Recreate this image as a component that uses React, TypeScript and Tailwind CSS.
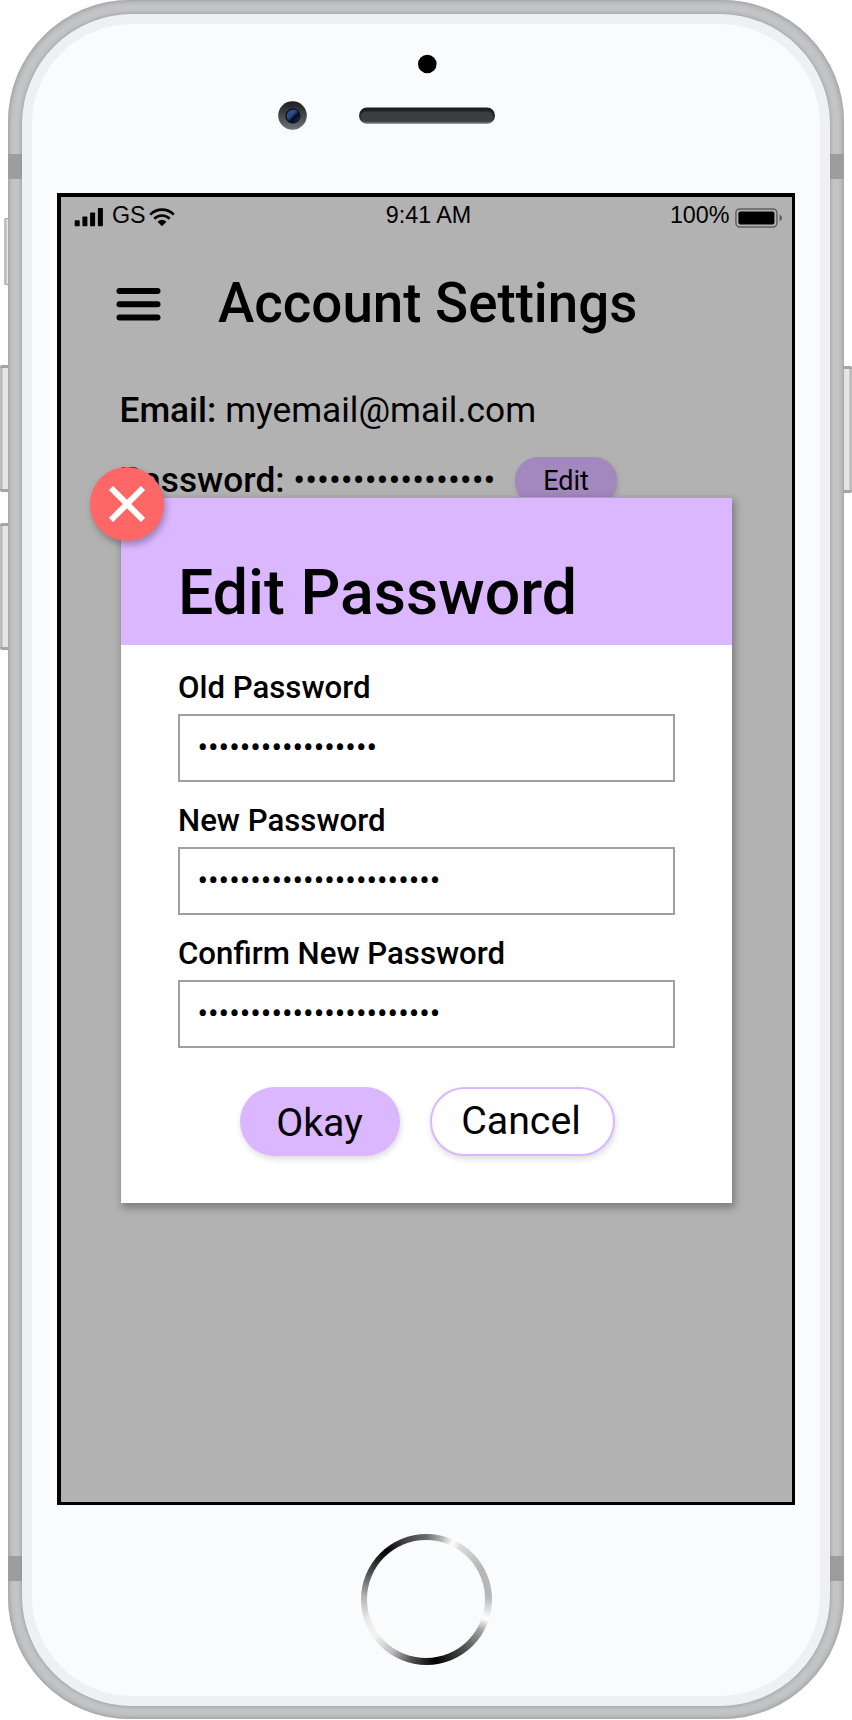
import React from "react";

const dots = (n: number) => "•".repeat(n);

function SideButton({ className }: { className: string }) {
  return (
    <div
      className={
        "absolute border-[#a3a6a5] bg-[linear-gradient(90deg,#c4c4c5_0px,#b4b4b5_2px,#e6e6e7_3px,#e2e2e3_100%)] " +
        className
      }
    />
  );
}

function PhoneHead() {
  return (
    <svg className="block h-[169.5px] w-full" viewBox="32 23.5 788 169.5" fill="none">
      <defs>
        <linearGradient id="cam" x1="0" y1="0" x2="0" y2="1">
          <stop offset="0" stopColor="#1a1c1d" />
          <stop offset="1" stopColor="#707172" />
        </linearGradient>
        <linearGradient id="lens" x1="0" y1="0" x2="1" y2="1">
          <stop offset="0" stopColor="#2c5294" />
          <stop offset="0.4" stopColor="#274a88" />
          <stop offset="0.58" stopColor="#070c1a" />
          <stop offset="0.72" stopColor="#0c1730" />
          <stop offset="1" stopColor="#24488a" />
        </linearGradient>
        <linearGradient id="slot" x1="0" y1="0" x2="0" y2="1">
          <stop offset="0" stopColor="#1b1c1e" />
          <stop offset="0.7" stopColor="#2c2d2e" />
          <stop offset="1" stopColor="#77787a" />
        </linearGradient>
        <pattern id="mesh" width="2" height="2" patternUnits="userSpaceOnUse">
          <rect width="2" height="2" fill="#2c2d2e" />
          <rect width="1" height="1" fill="#4b4c4d" />
          <rect x="1" y="1" width="1" height="1" fill="#4b4c4d" />
        </pattern>
      </defs>
      <circle cx="427.3" cy="63.5" r="9.3" fill="#000" />
      <circle cx="292.5" cy="115" r="14.3" fill="url(#cam)" />
      <circle cx="293" cy="115.5" r="7.6" fill="#080b12" />
      <circle cx="293.3" cy="115.7" r="6.6" fill="url(#lens)" />
      <rect x="359" y="107" width="136" height="16.3" rx="8" fill="url(#slot)" />
      <rect x="361" y="111" width="132" height="10" rx="5" fill="url(#mesh)" />
    </svg>
  );
}

function StatusBar() {
  return (
    <div className="grid grid-cols-[1fr_auto_1fr] items-start pt-[5px] pr-[9px] pl-[13px] font-['Liberation_Sans',Arial,sans-serif] text-[23.3px] leading-[26px]">
      <div className="flex">
        <svg className="mt-[6px] h-[19px] w-[30px]" viewBox="0 0 30 19">
          <rect x="0.7" y="12.3" width="5" height="6" rx="0.8" />
          <rect x="8.4" y="8.5" width="5" height="9.8" rx="0.8" />
          <rect x="16.1" y="4.5" width="5" height="13.8" rx="0.8" />
          <rect x="23.9" y="0" width="5" height="18.3" rx="0.8" />
        </svg>
        <span className="w-[45px] pl-2">GS</span>
        <svg className="mt-[6px] h-[18px] w-[26px]" viewBox="0 0 26 18" fill="none" stroke="#000" strokeWidth="2.7">
          <path d="M1.2 6.6C7.8 0 18.2 0 24.8 6.6" />
          <path d="M5.3 10.7C9.6 6.4 16.4 6.4 20.7 10.7" />
          <path d="M8.5 13.8Q13 9.8 17.5 13.8L13 18.2Z" fill="#000" stroke="none" />
        </svg>
      </div>
      <span>9:41 AM</span>
      <div className="flex justify-end gap-[5.5px]">
        <span>100%</span>
        <svg className="mt-[6px] h-[20px] w-[48px]" viewBox="0 0 48 20">
          <rect x="0.9" y="0.9" width="41" height="18.2" rx="4" fill="none" stroke="#5f5f5f" strokeWidth="1.5" />
          <rect x="3.4" y="3.6" width="36" height="13" rx="1.8" />
          <path d="M44.5 6.5Q50 10 44.5 13.2Z" fill="#5f5f5f" />
        </svg>
      </div>
    </div>
  );
}

function Field({ label, value }: { label: string; value: string }) {
  return (
    <div>
      <div className="h-[46px] text-[31.2px] leading-[39px] font-medium">{label}</div>
      <div className="h-[68px] border-2 border-[#a0a0a0] pl-[17.5px] text-[31.3px] leading-[63px]">{value}</div>
    </div>
  );
}

function EditPasswordDialog() {
  return (
    <div className="absolute top-[300px] left-[60px] flex h-[706px] w-[611px] flex-col bg-white shadow-[2px_4px_8px_1px_rgba(0,0,0,0.3)]">
      <div className="h-[148px] border-t border-[#aaa1b4] bg-[#dbb7ff] pt-[55px] pl-[57px] text-[62.6px] leading-[80px] font-medium">
        Edit Password
      </div>
      <div className="flex flex-col gap-[19px] px-[57px] pt-[22.5px]">
        <Field label="Old Password" value={dots(17)} />
        <Field label="New Password" value={dots(23)} />
        <Field label="Confirm New Password" value={dots(23)} />
      </div>
      <div className="flex justify-center gap-[30px] pt-[39.5px] pl-px text-[39.3px]">
        <button className="h-[69px] w-[160px] rounded-[35px] bg-[#dbb7ff] pt-[3px] shadow-[1px_3px_6px_rgba(0,0,0,0.14)]">
          Okay
        </button>
        <button className="h-[69px] w-[185px] rounded-[35px] border-2 border-[#dbb7ff] bg-white pr-[2px] shadow-[1px_3px_6px_rgba(0,0,0,0.14)]">
          Cancel
        </button>
      </div>
      <button className="absolute top-[-30px] left-[-31px] flex h-[74px] w-[74px] items-center justify-center rounded-full bg-[#ff6666] shadow-[2px_4px_7px_rgba(0,0,0,0.3)]">
        <svg className="h-[38px] w-[38px]" viewBox="0 0 38 38" stroke="#fff" strokeWidth="6">
          <path d="M3 3L35 35M35 3L3 35" />
        </svg>
      </button>
    </div>
  );
}

function Screen() {
  return (
    <div className="relative mx-auto h-[1312px] w-[738px] border-4 border-r-[3px] border-b-[3px] border-black bg-[#b2b2b2] text-black">
      <StatusBar />
      <div className="flex items-center gap-[57px] pt-[44px] pl-[55px]">
        <svg className="h-[34px] w-[45px]" viewBox="0 0 45 34">
          <rect x="0.5" y="1" width="44" height="6" rx="3" />
          <rect x="0.5" y="14.3" width="44" height="6" rx="3" />
          <rect x="0.5" y="27.6" width="44" height="6" rx="3" />
        </svg>
        <h1 className="-mt-px text-[54.7px] leading-[64px] font-medium whitespace-nowrap">Account Settings</h1>
      </div>
      <div className="flex flex-col gap-[26px] pt-[53px] pl-[58.5px] text-[35.25px] leading-[44px] whitespace-nowrap">
        <div>
          <span className="font-medium">Email:</span> myemail@mail.com
        </div>
        <div className="flex h-[44px] items-center">
          <div className="w-[395.5px]">
            <span className="font-medium">Password:</span> {dots(17)}
          </div>
          <button className="mt-[2px] h-[48px] w-[102px] rounded-[23px] bg-[#a388be] text-[27px] shadow-[1px_2px_5px_rgba(0,0,0,0.14)]">
            Edit
          </button>
        </div>
      </div>
      <EditPasswordDialog />
    </div>
  );
}

export default function App() {
  return (
    <div className="relative h-[1720px] w-[852px] overflow-hidden bg-white px-[8px] font-['Roboto',sans-serif]">
      <SideButton className="top-[218px] left-[4px] h-[67px] w-[5px] rounded-l-xs border-y" />
      <SideButton className="top-[365px] left-0 h-[127px] w-[9px] rounded-l-xs border-y-[3px]" />
      <SideButton className="top-[523px] left-0 h-[127px] w-[9px] rounded-l-xs border-y-[3px]" />
      <SideButton className="top-[366px] left-[843px] h-[127px] w-[9px] rotate-180 rounded-l-xs border-y-[3px]" />
      <div className="relative h-[1719px] w-[836px] overflow-hidden rounded-[122px] bg-[#c3c4c6] px-[14px] py-[13.5px] shadow-[inset_0_0_5px_1px_#98999a]">
        <div className="absolute top-[154px] left-0 h-[25px] w-full bg-[#9c9d9f]" />
        <div className="absolute top-[1556px] left-0 h-[25px] w-full bg-[#9c9d9f]" />
        <div className="relative h-[1692px] w-[808px] rounded-[110px] border-[10px] border-[#eff0f2] bg-[#fafbfd] shadow-[0_0_4px_#929394]">
          <PhoneHead />
          <Screen />
          <div className="mx-auto mt-[28.5px] h-[131px] w-[131px] rounded-full bg-[conic-gradient(#696a6b_0deg,#b5b5b6_14deg,#ffffff_25deg,#dcdcdd_32deg,#b6b6b7_60deg,#b8b8b9_88deg,#ffffff_108deg,#a0a0a1_120deg,#505152_142deg,#000_172deg,#505050_194deg,#bbbbbc_213deg,#f4f4f4_235deg,#e9e9ea_252deg,#b6b6b7_272deg,#4c4d4e_296deg,#000_320deg,#3e3e3f_338deg,#696a6b_360deg)] p-[6.5px]">
            <div className="h-full w-full rounded-full bg-[#fafbfd]" />
          </div>
        </div>
      </div>
    </div>
  );
}
